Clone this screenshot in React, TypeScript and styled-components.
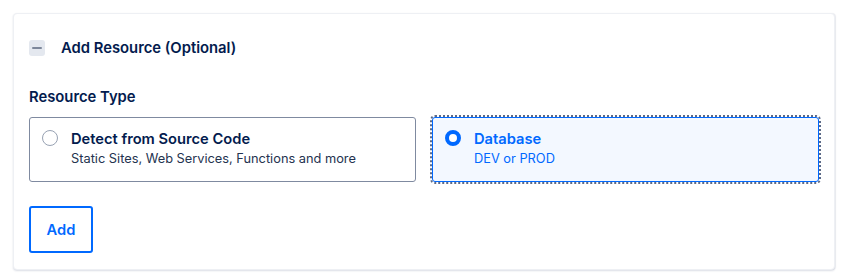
import React, { useState } from "react";
import styled, { createGlobalStyle } from "styled-components";

const Global = createGlobalStyle`
  html, body { margin: 0; padding: 0; background: #ffffff; }
  body { font-family: "Inter", "Lato", sans-serif; -webkit-font-smoothing: antialiased; }
  * { box-sizing: border-box; }
`;

const Page = styled.div`
  padding: 13px 16px 10px 13px;
`;

const Card = styled.section`
  width: 822px;
  border: 1px solid #eef0f4;
  border-radius: 4px;
  background: #fff;
  box-shadow: 0 1px 2px rgba(3, 27, 78, 0.14), 1px 0 1px rgba(3, 27, 78, 0.06);
  padding: 24px 15px 16px 15px;
`;

const Header = styled.div`
  display: flex;
  align-items: center;
  gap: 16px;
  height: 20px;
`;

const Toggle = styled.button`
  width: 16px;
  height: 16px;
  border: none;
  padding: 0;
  border-radius: 3px;
  background: #e4e8ef;
  display: flex;
  align-items: center;
  justify-content: center;
  cursor: pointer;
  &::before {
    content: "";
    width: 10px;
    height: 2px;
    border-radius: 1px;
    background: #7d879a;
  }
`;

const Title = styled.h2`
  margin: 0;
  font-size: 14.8px;
  font-weight: 600;
  color: #031b4e;
  line-height: 20px;
`;

const Label = styled.div`
  margin-top: 29px;
  font-size: 14.8px;
  font-weight: 600;
  color: #031b4e;
  line-height: 20px;
`;

const Options = styled.div`
  margin-top: 10px;
  display: grid;
  grid-template-columns: 1fr 1fr;
  column-gap: 16px;
`;

const Option = styled.label<{ $selected: boolean }>`
  display: flex;
  gap: 13px;
  height: 65px;
  padding: 11px 12px 13px 12px;
  border-radius: 3px;
  cursor: pointer;
  border: 1px solid ${(p) => (p.$selected ? "#0069ff" : "#7f8aa0")};
  background: ${(p) => (p.$selected ? "#f3f8ff" : "#ffffff")};
  outline: ${(p) => (p.$selected ? "2px dotted #5b6987" : "none")};
  outline-offset: 0;
`;

const Radio = styled.span<{ $selected: boolean }>`
  flex: none;
  width: 16px;
  height: 16px;
  margin-top: 1px;
  border-radius: 50%;
  background: #fff;
  border: ${(p) => (p.$selected ? "4.5px solid #0069ff" : "1px solid #98a2b3")};
`;

const Texts = styled.div`
  display: flex;
  flex-direction: column;
`;

const OptTitle = styled.span<{ $selected: boolean }>`
  font-size: 14.7px;
  font-weight: 600;
  line-height: 20px;
  color: ${(p) => (p.$selected ? "#0069ff" : "#031b4e")};
`;

const OptSub = styled.span<{ $selected: boolean }>`
  font-size: 12.8px;
  line-height: 18px;
  margin-top: 1px;
  color: ${(p) => (p.$selected ? "#0069ff" : "#24334f")};
`;

const AddButton = styled.button`
  margin-top: 24px;
  width: 64px;
  height: 47px;
  border: 2px solid #0069ff;
  border-radius: 3px;
  background: #fff;
  color: #0069ff;
  font-family: inherit;
  font-size: 14.7px;
  font-weight: 600;
  cursor: pointer;
`;

const options = [
  { id: "source", title: "Detect from Source Code", sub: "Static Sites, Web Services, Functions and more" },
  { id: "db", title: "Database", sub: "DEV or PROD" },
];

export default function App() {
  const [sel, setSel] = useState("db");
  return (
    <>
      <Global />
      <Page>
        <Card>
          <Header>
            <Toggle aria-label="Collapse" />
            <Title>Add Resource (Optional)</Title>
          </Header>
          <Label>Resource Type</Label>
          <Options>
            {options.map((o) => {
              const s = sel === o.id;
              return (
                <Option key={o.id} $selected={s} onClick={() => setSel(o.id)}>
                  <Radio $selected={s} />
                  <Texts>
                    <OptTitle $selected={s}>{o.title}</OptTitle>
                    <OptSub $selected={s}>{o.sub}</OptSub>
                  </Texts>
                </Option>
              );
            })}
          </Options>
          <AddButton>Add</AddButton>
        </Card>
      </Page>
    </>
  );
}
